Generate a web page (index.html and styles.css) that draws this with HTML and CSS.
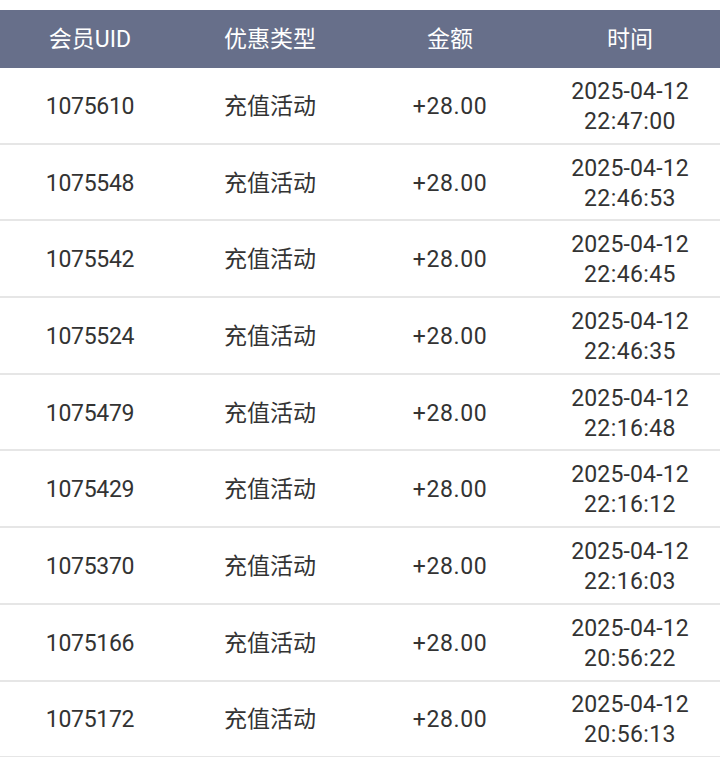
FILE: index.html
```html
<!DOCTYPE html>
<html lang="zh">
<head>
<meta charset="utf-8">
<link rel="stylesheet" href="styles.css">
</head>
<body>
<div class="table">
  <div class="row head">
    <div class="cell">会员UID</div>
    <div class="cell">优惠类型</div>
    <div class="cell">金额</div>
    <div class="cell">时间</div>
  </div>
  <div class="row"><div class="cell uid">1075610</div><div class="cell">充值活动</div><div class="cell amt">+28.00</div><div class="cell time"><span class="date">2025-04-12</span><span class="clock">22:47:00</span></div></div>
  <div class="row"><div class="cell uid">1075548</div><div class="cell">充值活动</div><div class="cell amt">+28.00</div><div class="cell time"><span class="date">2025-04-12</span><span class="clock">22:46:53</span></div></div>
  <div class="row"><div class="cell uid">1075542</div><div class="cell">充值活动</div><div class="cell amt">+28.00</div><div class="cell time"><span class="date">2025-04-12</span><span class="clock">22:46:45</span></div></div>
  <div class="row"><div class="cell uid">1075524</div><div class="cell">充值活动</div><div class="cell amt">+28.00</div><div class="cell time"><span class="date">2025-04-12</span><span class="clock">22:46:35</span></div></div>
  <div class="row"><div class="cell uid">1075479</div><div class="cell">充值活动</div><div class="cell amt">+28.00</div><div class="cell time"><span class="date">2025-04-12</span><span class="clock">22:16:48</span></div></div>
  <div class="row"><div class="cell uid">1075429</div><div class="cell">充值活动</div><div class="cell amt">+28.00</div><div class="cell time"><span class="date">2025-04-12</span><span class="clock">22:16:12</span></div></div>
  <div class="row"><div class="cell uid">1075370</div><div class="cell">充值活动</div><div class="cell amt">+28.00</div><div class="cell time"><span class="date">2025-04-12</span><span class="clock">22:16:03</span></div></div>
  <div class="row"><div class="cell uid">1075166</div><div class="cell">充值活动</div><div class="cell amt">+28.00</div><div class="cell time"><span class="date">2025-04-12</span><span class="clock">20:56:22</span></div></div>
  <div class="row"><div class="cell uid">1075172</div><div class="cell">充值活动</div><div class="cell amt">+28.00</div><div class="cell time"><span class="date">2025-04-12</span><span class="clock">20:56:13</span></div></div>
</div>
</body>
</html>
```
FILE: styles.css
```css
html, body {
  margin: 0;
  padding: 0;
  background: #ffffff;
}
body {
  padding-top: 10px;
  font-family: Roboto, "Noto Sans CJK SC", sans-serif;
  color: #333333;
  overflow: hidden;
}
.table {
  display: flex;
  flex-direction: column;
  width: 720px;
}
.row {
  display: grid;
  grid-template-columns: repeat(4, 1fr);
  height: 76.7px;
  box-sizing: border-box;
  border-bottom: 2px solid #e6e6e6;
}
.row.head {
  height: 58px;
  background: #676f8a;
  color: #ffffff;
  border-bottom: none;
}
.cell {
  display: flex;
  align-items: center;
  justify-content: center;
  text-align: center;
  font-size: 23px;
  line-height: 30px;
  padding-top: 3px;
}
.head .cell {
  font-size: 23px;
  padding-top: 2px;
}
.uid {
  letter-spacing: -0.3px;
}
.amt {
  letter-spacing: 0.6px;
}
.time {
  flex-direction: column;
}
.date {
  letter-spacing: 0.15px;
}
.clock {
  letter-spacing: 0.4px;
}
```
